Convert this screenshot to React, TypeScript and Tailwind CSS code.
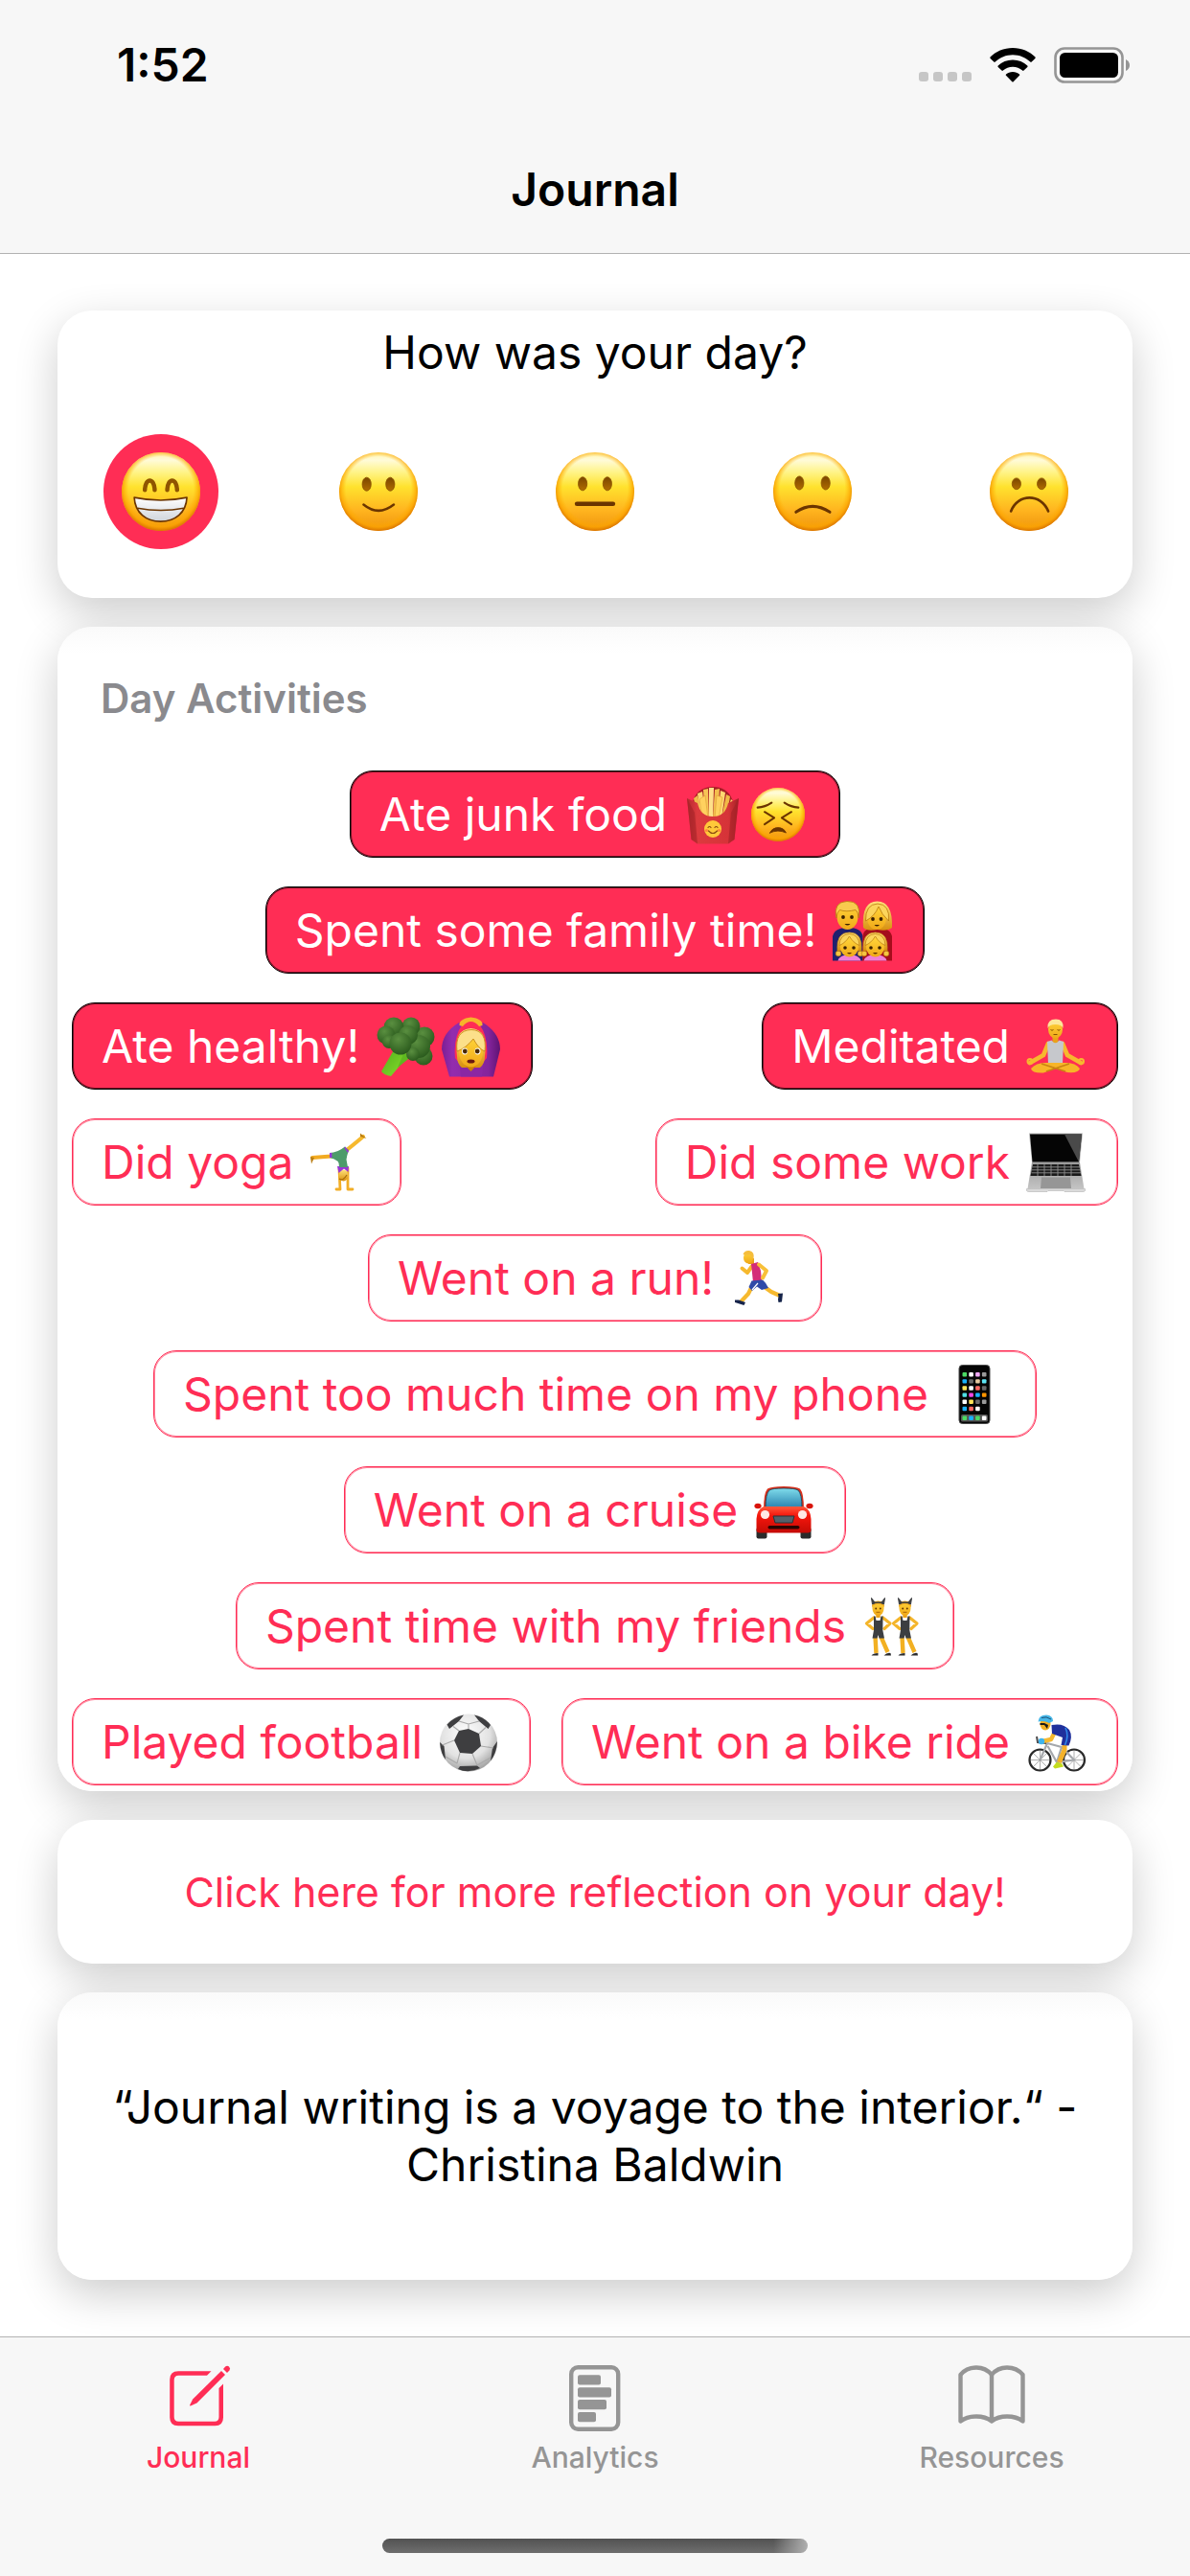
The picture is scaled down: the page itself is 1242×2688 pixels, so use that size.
import React, { useState } from "react";

/* ---------- shared gradients ---------- */

function Gradients() {
  return (
    <svg width="0" height="0" className="absolute" aria-hidden="true">
      <defs>
        <linearGradient id="faceFill" x1="0" y1="0" x2="0" y2="1">
          <stop offset="0" stopColor="#fff6b0" />
          <stop offset="0.1" stopColor="#fffbd8" />
          <stop offset="0.26" stopColor="#fff384" />
          <stop offset="0.44" stopColor="#ffe22e" />
          <stop offset="0.74" stopColor="#ffb41f" />
          <stop offset="1" stopColor="#ee920c" />
        </linearGradient>
        <radialGradient id="faceEdge" cx="0.5" cy="0.47" r="0.53">
          <stop offset="0.78" stopColor="#ffb000" stopOpacity="0" />
          <stop offset="0.9" stopColor="#fca400" stopOpacity="0.7" />
          <stop offset="1" stopColor="#d87200" />
        </radialGradient>
        <linearGradient id="eyeFill" x1="0" y1="0" x2="0" y2="1">
          <stop offset="0" stopColor="#7a4600" />
          <stop offset="1" stopColor="#b06c00" />
        </linearGradient>
        <linearGradient id="teeth" x1="0" y1="0" x2="0" y2="1">
          <stop offset="0" stopColor="#ffffff" />
          <stop offset="1" stopColor="#cfd4da" />
        </linearGradient>
        <linearGradient id="skin" x1="0" y1="0" x2="0" y2="1">
          <stop offset="0" stopColor="#ffd53a" />
          <stop offset="1" stopColor="#f0a818" />
        </linearGradient>
        <linearGradient id="hair" x1="0" y1="0" x2="0" y2="1">
          <stop offset="0" stopColor="#ffe27a" />
          <stop offset="1" stopColor="#d8900f" />
        </linearGradient>
        <linearGradient id="carton" x1="0" y1="0" x2="1" y2="0">
          <stop offset="0" stopColor="#b52a2e" />
          <stop offset="0.2" stopColor="#dc3a3e" />
          <stop offset="0.8" stopColor="#d63338" />
          <stop offset="1" stopColor="#a52226" />
        </linearGradient>
        <linearGradient id="purple" x1="0" y1="0" x2="1" y2="0">
          <stop offset="0" stopColor="#7b1f93" />
          <stop offset="0.18" stopColor="#932cae" />
          <stop offset="0.8" stopColor="#84249c" />
          <stop offset="1" stopColor="#5e1373" />
        </linearGradient>
        <radialGradient id="floret" cx="0.4" cy="0.3" r="0.7">
          <stop offset="0" stopColor="#5a8f40" />
          <stop offset="1" stopColor="#2c5c1e" />
        </radialGradient>
        <linearGradient id="stem" x1="0" y1="0" x2="1" y2="1">
          <stop offset="0" stopColor="#4fae1c" />
          <stop offset="1" stopColor="#8be02c" />
        </linearGradient>
        <linearGradient id="glass" x1="0" y1="0" x2="0" y2="1">
          <stop offset="0" stopColor="#7fdceb" />
          <stop offset="1" stopColor="#2b84b0" />
        </linearGradient>
        <linearGradient id="carBody" x1="0" y1="0" x2="0" y2="1">
          <stop offset="0" stopColor="#ff5a3c" />
          <stop offset="0.35" stopColor="#f5160c" />
          <stop offset="1" stopColor="#c40b05" />
        </linearGradient>
        <radialGradient id="ball" cx="0.45" cy="0.35" r="0.65">
          <stop offset="0" stopColor="#ffffff" />
          <stop offset="0.65" stopColor="#e2e2e2" />
          <stop offset="1" stopColor="#a3a3a3" />
        </radialGradient>
        <linearGradient id="metal" x1="0" y1="0" x2="0" y2="1">
          <stop offset="0" stopColor="#9a9a9a" />
          <stop offset="1" stopColor="#c4c4c4" />
        </linearGradient>
      </defs>
    </svg>
  );
}

/* ---------- faces, drawn on a 100 unit disc ---------- */

function Eyes({ dx, y, rx = 5.6, ry = 8.6 }: { dx: number; y: number; rx?: number; ry?: number }) {
  return (
    <g fill="url(#eyeFill)" stroke="#8a5200" strokeWidth="1">
      <ellipse cx={50 - dx} cy={y} rx={rx} ry={ry} />
      <ellipse cx={50 + dx} cy={y} rx={rx} ry={ry} />
    </g>
  );
}

const mouthLine = { fill: "none", stroke: "#6b3500", strokeWidth: 3.6, strokeLinecap: "round" as const };

const features: Record<string, React.ReactNode> = {
  grin: (
    <g>
      <path d="M29.500 48C30 32 41.500 32 42 48M58 48C58.500 32 70 32 70.500 48" fill="none" stroke="#8f5500" strokeWidth="5.400" strokeLinecap="round" />
      <path d="M16 57.500Q50 64.500 83 57.500C82 77 68 88 49.500 88C31 88 17 77 16 57.500Z" fill="url(#teeth)" stroke="#6b3500" strokeWidth="2" strokeLinejoin="round" />
      <path d="M20 71Q50 76.500 79 71" fill="none" stroke="#6b3500" strokeWidth="2" />
    </g>
  ),
  smile: (
    <g>
      <Eyes dx={15} y={40.5} />
      <path d="M31 66.500Q50 82 69.500 66.500" {...mouthLine} strokeWidth={3} />
    </g>
  ),
  neutral: (
    <g>
      <Eyes dx={15.7} y={40} />
      <path d="M27 65.500H73" stroke="#6b3500" strokeWidth="5.600" strokeLinecap="round" />
    </g>
  ),
  slightFrown: (
    <g>
      <Eyes dx={16.700} y={39} />
      <path d="M29 76Q50 61.500 72 76" {...mouthLine} />
    </g>
  ),
  frown: (
    <g>
      <Eyes dx={16} y={40} ry={7.2} />
      <path d="M27 75C36 52 65 52 74.500 75" {...mouthLine} strokeWidth={3.200} />
    </g>
  ),
  persevere: (
    <g fill="none" stroke="#6b3500" strokeWidth="4" strokeLinecap="round" strokeLinejoin="round">
      <path d="M12 37Q26 36 38 28M88 37Q74 36 62 28" />
      <path d="M25 45L43 56L25 68M75 45L57 56L75 68" strokeWidth="3.600" />
      <path d="M35 84C40 71 60 71 65 84Q50 77 35 84Z" fill="#6b3500" strokeWidth="1.500" />
    </g>
  ),
};

function Face({ kind, label, className }: { kind: string; label: string; className: string }) {
  return (
    <svg viewBox="0 0 100 100" className={className} role="img" aria-label={label}>
      <circle cx="50" cy="50" r="50" fill="url(#faceFill)" />
      <circle cx="50" cy="50" r="50" fill="url(#faceEdge)" />
      {features[kind]}
    </svg>
  );
}

/* ---------- small pictures, drawn on a 64 unit square ---------- */

function Bunny() {
  return (
    <g>
      <path d="M13 23L5.500 29L12 34.500M22.500 23L30 29L24 34.500" fill="none" stroke="#f4b52a" strokeWidth="3.200" strokeLinejoin="round" strokeLinecap="round" />
      <path d="M14.500 43L15.500 60M20.500 43L27.500 59" stroke="#f2b022" strokeWidth="4.400" />
      <path d="M10.500 62.500Q12 60 17.500 60V62.500ZM23.500 62.500Q27 59 30.500 60L31 62.500Z" fill="#2b2c2e" />
      <rect x="15.300" y="18" width="4.400" height="5" fill="#e9a21b" />
      <path d="M13 21.500H14.500L15.500 26H19.500L20.500 21.500H22.500L22.300 36L24 44.500H18.500L17.500 41L16.500 44.500H11.500L13 36Z" fill="#3c3e41" />
      <ellipse cx="17.500" cy="13.500" rx="6" ry="7.500" fill="url(#skin)" />
      <path d="M11 13Q10.500 5.500 17.500 5.500Q24.500 5.500 24 13Q23 9 17.500 9Q12 9 11 13Z" fill="#efab20" />
      <path d="M11.500 9Q17.500 5.500 23.500 9L24.500 2.500L21 7H14L10.500 2.500Z" fill="#3c3e41" stroke="#3c3e41" strokeLinejoin="round" />
      <circle cx="15.200" cy="13.500" r="0.900" fill="#5b3200" />
      <circle cx="19.800" cy="13.500" r="0.900" fill="#5b3200" />
      <path d="M15.500 17.300H19.500" stroke="#a05a00" strokeWidth="0.900" />
    </g>
  );
}

function Girl({ x }: { x: number }) {
  return (
    <g transform={`translate(${x} 0)`}>
      <path d="M-12 63.500Q-10 57 0 57Q10 57 12 63.500Z" fill="#f07fd6" />
      <circle cx="-11.500" cy="56" r="2.800" fill="#f5c542" stroke="#b9780c" strokeWidth="0.600" />
      <circle cx="11.500" cy="56" r="2.800" fill="#f5c542" stroke="#b9780c" strokeWidth="0.600" />
      <path d="M-12.500 53Q-14 34 0 34Q14 34 12.500 53Z" fill="url(#hair)" stroke="#c98a14" strokeWidth="0.700" />
      <ellipse cx="0" cy="49.500" rx="9.500" ry="10" fill="url(#skin)" />
      <path d="M-10.500 47.500Q-4 45 0 38Q4 45 10.500 47.500Q10 36 0 35.500Q-10 36 -10.500 47.500Z" fill="#fbd55c" stroke="#b9780c" strokeWidth="0.700" />
      <circle cx="-4.500" cy="50" r="1.800" fill="#3a2100" />
      <circle cx="4.500" cy="50" r="1.800" fill="#3a2100" />
      <path d="M-2.500 55Q0 58 2.500 55Z" fill="#5b2c00" />
    </g>
  );
}

const appColors = [
  "#4cd964", "#ffffff", "#f0a8f5", "#9a9a9a",
  "#19b2ff", "#6a6a6a", "#e6c9a0", "#5ee6f5",
  "#ffe55a", "#ffffff", "#ff6a63", "#6a6a6a",
  "#4fe0e6", "#f046e6", "#19b2ff", "#ff9500",
  "#ffffff", "#ffe55a", "#6a6a6a", "#9a9a9a",
  "#19b2ff", "#ff6a63", "#ffffff",
];
const dockColors = ["#4cd964", "#19b2ff", "#4cd964", "#ffffff"];

const pictures: Record<string, React.ReactNode> = {
  "🍟": (
    <g>
      <path d="M10 22Q14 3 32 3Q50 3 54 22V40H10Z" fill="#a81f25" />
      <path d="M12 15L16 12L22 38H17Z" fill="#f0bb4b" />
      <path d="M16 10L21 8L25 36H20Z" fill="#ffd873" />
      <path d="M22 6L27 5L28 36H24Z" fill="#f6c556" />
      <path d="M28 4L33 4L32 36H28Z" fill="#ffe08a" />
      <path d="M34 6L39 5L37 36H32Z" fill="#f3be4d" />
      <path d="M40 7L45 9L41 36H37Z" fill="#ffd873" />
      <path d="M46 11L50 13L46 36H41Z" fill="#f0b847" />
      <path d="M51 16L54 19L49 36H45Z" fill="#ffd46a" />
      <path d="M18 16L24 12L27 36H21ZM36 12L42 14L38 36H34Z" fill="#ffd15f" stroke="#dd9f35" strokeWidth="0.600" />
      <path d="M5 15L16 20Q19 34 32 34Q45 34 48 20L59 15L54.500 58L48 62.500H16L9.500 58Z" fill="url(#carton)" />
      <path d="M9.500 58L16 62.500L13 30L5 15ZM54.500 58L48 62.500L51 30L59 15Z" fill="#a02126" opacity="0.550" />
      <circle cx="32" cy="47" r="9" fill="#ffc93a" />
      <path d="M27 45.500Q28.500 43.500 30 45.500M34 45.500Q35.500 43.500 37 45.500M27.500 49Q32 54 36.500 49" fill="none" stroke="#8a4a10" strokeWidth="1.200" strokeLinecap="round" />
      <circle cx="25.500" cy="48.500" r="1.600" fill="#ff8a3a" />
      <circle cx="38.500" cy="48.500" r="1.600" fill="#ff8a3a" />
    </g>
  ),
  "👨‍👩‍👧‍👧": (
    <g>
      <path d="M1 63.500V38Q3 29 17 29Q31 29 32.500 38V63.500Z" fill="#20206e" />
      <path d="M63 63.500V38Q61 29 47 29Q33 29 32.500 38V63.500Z" fill="#a50d1c" />
      <path d="M33 29Q31 1.500 47.500 1.500Q64 1.500 63 29Q58 33 47.500 31Q37 33 33 29Z" fill="url(#hair)" />
      <ellipse cx="16.500" cy="17.500" rx="11" ry="13.500" fill="url(#skin)" />
      <path d="M4.800 19Q1.500 2 16 1.500Q31.500 1 28.300 19Q27.500 12 25 10.500Q15 13 8.500 10.500Q5.500 13 4.800 19Z" fill="#f8cb4e" stroke="#b9780c" strokeWidth="0.800" />
      <ellipse cx="47" cy="19" rx="10" ry="12" fill="url(#skin)" />
      <path d="M35.500 22Q45 17 49 7Q52 15 59.500 22Q61 4.500 48 4Q35 4.500 35.500 22Z" fill="#fbd55c" stroke="#b9780c" strokeWidth="0.800" />
      <g fill="#3a2100">
        <circle cx="12" cy="18" r="1.900" />
        <circle cx="21" cy="18" r="1.900" />
        <circle cx="43" cy="20" r="1.900" />
        <circle cx="51.500" cy="20" r="1.900" />
        <path d="M13.500 25Q16.500 28 19.500 25ZM44.500 26Q47.200 29 50 26Z" />
      </g>
      <Girl x={18.500} />
      <Girl x={45.500} />
    </g>
  ),
  "🥦": (
    <g>
      <path d="M21 34L34 38L28 50L17 63Q10 62 7 58Z" fill="url(#stem)" />
      <path d="M30 40L44 38L24 54Z" fill="#5fb81f" />
      <g fill="url(#floret)">
        <circle cx="51" cy="42" r="9.500" />
        <circle cx="52" cy="22" r="10.500" />
        <circle cx="46" cy="32" r="12" />
        <circle cx="38" cy="11" r="9.500" />
        <circle cx="20" cy="12" r="10.500" />
        <circle cx="12" cy="20" r="9.500" />
        <circle cx="35" cy="20" r="10" />
        <circle cx="15" cy="27" r="7" />
        <circle cx="40" cy="40" r="7" />
        <circle cx="27" cy="29" r="11.500" />
      </g>
    </g>
  ),
  "🙆‍♀️": (
    <g>
      <path d="M20 7Q2 18 2 35L10 63.500H56L63 35Q63 18 45 7L42 10Q51 22 49 44L44 50H21L16 44Q14 22 23 10Z" fill="url(#purple)" />
      <path d="M20 45L22 63.500H44L46 45Z" fill="#8a27a3" />
      <path d="M20.500 10Q20 3 32.500 1.500Q45 3 44.500 10L41 11Q37 6 32.500 6Q28 6 24 11Z" fill="#f6b52a" />
      <path d="M18 42Q14 14 32.500 13Q51 14 47 42Q47 50 42 54H23Q18 50 18 42Z" fill="url(#hair)" />
      <path d="M32.500 58L26 51H39Z" fill="#c97e0c" />
      <ellipse cx="32.500" cy="37.500" rx="12.500" ry="16" fill="url(#skin)" />
      <path d="M18 37Q15.500 15 33 14.500Q49.500 15 47 37Q41 35 35 24Q27 34 18 37Z" fill="#fce08a" stroke="#bf7f10" strokeWidth="0.800" />
      <ellipse cx="26" cy="37" rx="3" ry="3.400" fill="#fff" />
      <ellipse cx="39.500" cy="37" rx="3" ry="3.400" fill="#fff" />
      <circle cx="26.300" cy="37" r="2.400" fill="#4a2a00" />
      <circle cx="39.200" cy="37" r="2.400" fill="#4a2a00" />
      <ellipse cx="32.500" cy="47.500" rx="4" ry="2" fill="#6b1a10" />
    </g>
  ),
  "🧘": (
    <g>
      <path d="M24 29L19 41L5 49M39 29L44 41L58 49" fill="none" stroke="#f6b92e" strokeWidth="4.600" strokeLinecap="round" strokeLinejoin="round" />
      <circle cx="5" cy="47.500" r="2.500" fill="none" stroke="#f6b92e" strokeWidth="2" />
      <circle cx="58.500" cy="47.500" r="2.500" fill="none" stroke="#f6b92e" strokeWidth="2" />
      <rect x="28.500" y="20" width="6" height="9" fill="#e9a21b" />
      <path d="M23 27L27.500 25.500Q31.500 31 35.500 25.500L40 27L39 50H24Z" fill="#c6c8cc" />
      <path d="M6 55Q12 48 24 49L40 49Q52 48 57 55Q56 60 44 59L31.500 55L19 59.500Q7 60 6 55Z" fill="#f7b528" />
      <path d="M17 50L42 58M46 50L22 58" stroke="#c98312" strokeWidth="1.500" />
      <ellipse cx="31.500" cy="14" rx="7.500" ry="9.500" fill="url(#skin)" />
      <path d="M23.500 13Q22.500 3.500 32 3.500Q40.500 3.500 39.500 13Q38 9 31.500 9Q25 9 23.500 13Z" fill="#fde79a" />
      <path d="M26.500 14.500Q28 16 29.500 14.500M33.500 14.500Q35 16 36.500 14.500M29.500 19.500H33.500" stroke="#8a5200" strokeWidth="1" fill="none" />
    </g>
  ),
  "🤸‍♀️": (
    <g>
      <path d="M36 22Q44 16 57 5" stroke="#f6b92e" strokeWidth="4.200" fill="none" strokeLinecap="round" />
      <path d="M54 5L60.500 7L54 1.500Z" fill="#b97d12" />
      <path d="M30 25L4 27" stroke="#f2ab22" strokeWidth="3.800" strokeLinecap="round" />
      <path d="M2 26L6 27L3 33.500Z" fill="#b97d12" />
      <path d="M32 39L33 60H29M41 38L41 60L46 60" fill="none" stroke="#f2ae26" strokeWidth="2.800" strokeLinejoin="round" strokeLinecap="round" />
      <ellipse cx="36.500" cy="45.500" rx="4.800" ry="6" fill="url(#hair)" />
      <path d="M32 49Q36 52 40 45" stroke="#a96c0b" strokeWidth="1.200" fill="none" />
      <path d="M30 36L42 36L41.500 42L37 38.500L31.500 43Z" fill="#9a35d6" />
      <path d="M22 22Q30 22 38 15.500L42 19Q40 25 39.500 29L41 37H32Q33 29 22 27Z" fill="#4d9b6b" />
      <path d="M38 15.500L42 20L41 22L37.500 17ZM22 22L24.500 22V27H22Z" fill="#9a35d6" />
    </g>
  ),
  "💻": (
    <g>
      <path d="M4 1.500H60L57 32H7Z" fill="#b8b8b8" />
      <path d="M5 2.500H59L56 31.500H7.500Z" fill="#050505" />
      <path d="M41 2.500H59L56 31.500Z" fill="#4a4a4a" />
      <path d="M7 32H57L61.500 59.500H2.500Z" fill="url(#metal)" />
      <path d="M8 34H56L58.500 46H5.500Z" fill="#1a1a1a" />
      <path d="M7.500 36.800H57M7 39.800H57.500M6.500 42.800H58M13 34V46M20 34V46M27 34V46M34 34V46M41 34V46M48 34V46" stroke="#8f8f8f" strokeWidth="0.900" />
      <path d="M17 47.500H47L48 59H16Z" fill="#969696" />
      <path d="M1.500 59.500H62.500V61.500Q62 62.500 60 62.500H41L40 61.500H24L23 62.500H4Q2 62.500 1.500 61.500Z" fill="#dadada" stroke="#a8a8a8" strokeWidth="0.500" />
    </g>
  ),
  "🏃‍♂️": (
    <g>
      <path d="M24 19L19 26L13.500 21.500" fill="none" stroke="#f6b92e" strokeWidth="4" strokeLinejoin="round" strokeLinecap="round" />
      <path d="M37 41L44 46L53 50" fill="none" stroke="#f6b92e" strokeWidth="4.400" strokeLinejoin="round" strokeLinecap="round" />
      <path d="M24 40L20 48L12.500 56" fill="none" stroke="#f6b92e" strokeWidth="4.200" strokeLinejoin="round" strokeLinecap="round" />
      <path d="M6 54.500L10 54.500L17 57L15.500 60L6 57Z" fill="#16244a" />
      <path d="M51 48L56 47.500L55 56.500L51.500 57Q50.500 54 51.500 51Z" fill="#16244a" />
      <rect x="20" y="11" width="6" height="6" fill="#e9a21b" />
      <path d="M23 17L30 15L33 24L34 34L25 36Q24 26 23 17Z" fill="#d42c78" />
      <path d="M23.500 34.500L35 33.500Q39 37 41 42L34 44L29 40.500L24 45L20.500 41Z" fill="#2f4aa8" />
      <path d="M24 44L30 37" stroke="#ffffff" strokeWidth="1.200" />
      <path d="M31 17.500L39 24L35 31.500" fill="none" stroke="#f8c038" strokeWidth="4" strokeLinejoin="round" strokeLinecap="round" />
      <ellipse cx="20" cy="10.500" rx="5" ry="6" fill="url(#skin)" />
      <path d="M14.500 7Q16 2.500 21 3Q27 4 25.500 12L23 10L22 7Q18 8 14.500 7Z" fill="#f5bd3c" />
    </g>
  ),
  "📱": (
    <g>
      <rect x="16" y="1.500" width="32" height="61" rx="3.500" fill="#050505" stroke="#4b4b4b" />
      <rect x="18" y="53" width="28" height="7.500" rx="1.500" fill="#555" />
      {appColors.map((c, i) => (
        <rect key={i} x={19.500 + (i % 4) * 6.800} y={9 + Math.floor(i / 4) * 7.150} width="4.600" height="4.400" rx="1" fill={c} />
      ))}
      {dockColors.map((c, i) => (
        <rect key={i} x={19.500 + i * 6.800} y={54.600} width="4.600" height="4.400" rx="1" fill={c} />
      ))}
    </g>
  ),
  "🚘": (
    <g>
      <rect x="3.500" y="50" width="11" height="11.500" rx="2" fill="#2a2a2a" />
      <rect x="49.500" y="50" width="11" height="11.500" rx="2" fill="#2a2a2a" />
      <ellipse cx="5" cy="27.500" rx="3.600" ry="2.800" fill="#d9140b" />
      <ellipse cx="59" cy="27.500" rx="3.600" ry="2.800" fill="#d9140b" />
      <path d="M11 31Q11 14 15 9.500Q19 7 32 7Q45 7 49 9.500Q53 14 53 31Z" fill="#d8301c" />
      <path d="M13 29Q13 15 17 11Q20 9 32 9Q44 9 47 11Q51 15 51 29Z" fill="url(#glass)" stroke="#173c52" strokeWidth="0.800" />
      <path d="M11 28H53Q60 31 60.500 41V53Q60 55.500 57 55.500H7Q4 55.500 3.500 53V41Q4 31 11 28Z" fill="url(#carBody)" />
      <circle cx="12.500" cy="36.500" r="4.600" fill="#ffe9e4" />
      <circle cx="51.500" cy="36.500" r="4.600" fill="#ffe9e4" />
      <path d="M21 38H43L41 45H23Z" fill="#54616a" stroke="#2a3338" strokeWidth="1" />
      <rect x="15.500" y="48" width="33" height="3.600" rx="1.800" fill="#2b0502" />
    </g>
  ),
  "👯": (
    <g>
      <Bunny />
      <g transform="translate(28 0)">
        <Bunny />
      </g>
    </g>
  ),
  "⚽": (
    <g>
      <circle cx="32" cy="32.500" r="30" fill="url(#ball)" />
      <path d="M32 18L22 20L17 30L23 43L36 44L45 36L43 23Z" fill="#3e3e40" />
      <path d="M27 3.500Q16 6 9.500 13.500L12 18L22 10ZM38 3.500Q49 6 55 14L52.500 18L43 10ZM2 32Q3 44 8 50L6.500 36ZM62 31Q61.500 43 55 51.500L57 38ZM23 57L41 56.500L44 59Q32 65 21 60Z" fill="#3e3e40" />
      <path d="M22 20L16 15.500M43 23L50 16.500M17 30L4.500 35M23 43L20 54M36 44L41 56M45 36L58 38M22 10L32 13L43 10M32 13V18M20 54L8 47M41 56L55 48" stroke="#a9a9a9" strokeWidth="1.100" fill="none" />
    </g>
  ),
  "🚴‍♂️": (
    <g>
      <g fill="none" stroke="#8d8d8d" strokeWidth="0.700">
        <path d="M5 50.500H26M15.500 40V61M8 43L23 58M23 43L8 58M40.500 50.500H61.500M51 40V61M43.500 43L58.500 58M58.500 43L43.500 58" />
      </g>
      <g fill="none" stroke="#2a2a2a" strokeWidth="2.200">
        <circle cx="15.500" cy="50.500" r="11" />
        <circle cx="51" cy="50.500" r="11" />
      </g>
      <path d="M15.500 50.500L23 33L38 37L33 53L23.500 36M33 53L51 50.500L38 37" fill="none" stroke="#a5a8ac" strokeWidth="2.200" strokeLinejoin="round" />
      <path d="M22 33L13 32L12 26" fill="none" stroke="#4c4c4e" strokeWidth="2" />
      <path d="M41 33L41 40L35.500 53" fill="none" stroke="#f4b22a" strokeWidth="5" strokeLinejoin="round" />
      <path d="M29 57.500L33 52.500L38.500 54.500L40 57.500L31 59.500Z" fill="#c3dc1e" />
      <path d="M31 21L27 29L18 31" fill="none" stroke="#f6b92e" strokeWidth="4.400" strokeLinejoin="round" strokeLinecap="round" />
      <circle cx="17" cy="31" r="3.200" fill="#3db4ee" />
      <path d="M27.500 14Q40 11.500 46 19Q50 26 45.500 35.500L37.500 35L39 27L28 23Z" fill="#20309c" />
      <path d="M42 17Q46 25 41.500 35" fill="none" stroke="#2f86e8" strokeWidth="1.600" />
      <ellipse cx="21" cy="13" rx="5.500" ry="6.500" fill="#f3b024" />
      <path d="M15.500 12H20L24 14L23 18L20 14H15.500Z" fill="#1b1b1b" />
      <path d="M13.500 10.500Q14 3.500 22 3.500Q29 4 29 10L25 12Q20 9 13.500 10.500Z" fill="#47b7e8" />
      <path d="M17 6.500Q22 4.500 27 8" fill="none" stroke="#1c4f74" strokeWidth="1" />
    </g>
  ),
};

function Picture({ emoji }: { emoji: string }) {
  return (
    <span className="flex w-[68px] justify-center">
      {emoji === "😣" ? (
        <Face kind="persevere" label={emoji} className="size-14" />
      ) : (
        <svg viewBox="0 0 64 64" className="size-16" role="img" aria-label={emoji}>
          {pictures[emoji]}
        </svg>
      )}
    </span>
  );
}

/* ---------- status bar and tab icons ---------- */

function WifiIcon() {
  return (
    <svg viewBox="0 0 48 36" className="h-9 w-12" aria-hidden="true">
      <path d="M24 0C33.500 0 41.500 3.600 47.500 9.500Q48 10.200 47.400 10.900L43.700 14.600Q43 15.200 42.300 14.600C37.300 9.900 31 7.200 24 7.200S10.700 9.900 5.700 14.600Q5 15.200 4.300 14.600L0.600 10.900Q0 10.200 0.500 9.500C6.500 3.600 14.500 0 24 0Z" />
      <path d="M24 12.500C30 12.500 35.300 14.800 39.300 18.400Q40 19.200 39.300 19.900L35.500 23.600Q34.800 24.200 34.100 23.600C31.300 21.200 27.900 19.700 24 19.700S16.700 21.200 13.900 23.600Q13.200 24.200 12.500 23.600L8.700 19.900Q8 19.200 8.700 18.400C12.700 14.800 18 12.500 24 12.500Z" />
      <path d="M24 25C26.800 25 29.200 25.900 31 27.400Q31.700 28.100 31 28.800L24.700 35.200Q24 35.800 23.300 35.200L17 28.800Q16.300 28.100 17 27.400C18.800 25.900 21.200 25 24 25Z" />
    </svg>
  );
}

function BatteryIcon() {
  return (
    <svg viewBox="0 0 80 38" className="h-[38px] w-20" aria-hidden="true">
      <rect x="1.500" y="1.500" width="70" height="35" rx="9.500" fill="none" stroke="#959595" strokeWidth="2.600" />
      <rect x="6" y="6" width="61" height="26" rx="5.500" />
      <path d="M75 13Q79 15 79 19T75 25Z" fill="#959595" />
    </svg>
  );
}

function ComposeIcon() {
  return (
    <svg viewBox="0 0 72 72" className="size-[72px]" aria-hidden="true">
      <path d="M49.500 8.200H15Q6.200 8.200 6.200 17V56.500Q6.200 65.300 15 65.300H53.500Q62 65.300 62 56.500V21.500L57.500 26V56Q57.500 60.800 53 60.800H15.500Q10.700 60.800 10.700 56V17.500Q10.700 12.700 15.500 12.700H45Z" fill="currentColor" />
      <path d="M60 8L64 12L34.500 41.500L27.800 44.400Q26.800 44.500 27.200 43.500L30.200 37.500Z" fill="currentColor" />
      <path d="M62 6L64.200 3.600Q66.200 2 68 3.600Q70 5.500 68.400 7.600L66 10Z" fill="currentColor" />
    </svg>
  );
}

function AnalyticsIcon() {
  return (
    <svg viewBox="0 0 72 72" className="size-[72px]" aria-hidden="true">
      <rect x="11.200" y="4.200" width="49" height="64.600" rx="7" fill="none" stroke="currentColor" strokeWidth="4.400" />
      <g fill="currentColor">
        <rect x="18" y="12.300" width="24" height="10.300" rx="2" />
        <rect x="18" y="25.200" width="35" height="10.300" rx="2" />
        <rect x="18" y="38" width="30" height="10.300" rx="2" />
        <rect x="18" y="50.900" width="19" height="10.300" rx="2" />
      </g>
    </svg>
  );
}

function BookIcon() {
  return (
    <svg viewBox="0 0 72 72" className="size-[72px]" aria-hidden="true">
      <path d="M3.500 60.500V12C8 6.500 14 4.500 20 4.500S31.500 6.500 36 12C40.500 6.500 46 4.500 52 4.500S64 6.500 68.500 12V60.500C64 57 58.500 55.500 52 55.500S40.500 57 36 60.500C31.500 57 26.500 55.500 20 55.500S8 57 3.500 60.500ZM36 12V60.500" fill="none" stroke="currentColor" strokeWidth="4.400" strokeLinejoin="round" />
    </svg>
  );
}

/* ---------- data ---------- */

const moods = [
  { kind: "grin", label: "😁" },
  { kind: "smile", label: "🙂" },
  { kind: "neutral", label: "😐" },
  { kind: "slightFrown", label: "🙁" },
  { kind: "frown", label: "☹️" },
];

type Activity = { text: string; emojis: string[] };

const activityRows: Activity[][] = [
  [{ text: "Ate junk food", emojis: ["🍟", "😣"] }],
  [{ text: "Spent some family time!", emojis: ["👨‍👩‍👧‍👧"] }],
  [
    { text: "Ate healthy!", emojis: ["🥦", "🙆‍♀️"] },
    { text: "Meditated", emojis: ["🧘"] },
  ],
  [
    { text: "Did yoga", emojis: ["🤸‍♀️"] },
    { text: "Did some work", emojis: ["💻"] },
  ],
  [{ text: "Went on a run!", emojis: ["🏃‍♂️"] }],
  [{ text: "Spent too much time on my phone", emojis: ["📱"] }],
  [{ text: "Went on a cruise", emojis: ["🚘"] }],
  [{ text: "Spent time with my friends", emojis: ["👯"] }],
  [
    { text: "Played football", emojis: ["⚽"] },
    { text: "Went on a bike ride", emojis: ["🚴‍♂️"] },
  ],
];

const tabs = [
  { name: "Journal", Icon: ComposeIcon },
  { name: "Analytics", Icon: AnalyticsIcon },
  { name: "Resources", Icon: BookIcon },
];

/* ---------- page parts ---------- */

function Card({ tinted = false, className = "", children }: { tinted?: boolean; className?: string; children: React.ReactNode }) {
  const fill = tinted ? "bg-[linear-gradient(#fafafa,#ffffff_28px)]" : "bg-white";
  return <section className={`rounded-[36px] shadow-[0_15px_45px_rgba(0,0,0,0.2)] ${fill} ${className}`}>{children}</section>;
}

function Chip({ activity, on, onToggle }: { activity: Activity; on: boolean; onToggle: () => void }) {
  const look = on
    ? "border-black bg-[#ff2d55] text-white shadow-[inset_0_0_0_1px_#00000090]"
    : "border-[#ff2d55] bg-white text-[#ff2d55] shadow-[inset_0_0_0_1px_#ff2d5590]";
  return (
    <button
      type="button"
      aria-pressed={on}
      onClick={onToggle}
      className={`flex h-[91px] items-center gap-[14px] rounded-3xl border px-[30px] text-5xl whitespace-nowrap ${look}`}
    >
      {activity.text}
      <span className="flex items-center">
        {activity.emojis.map((e) => (
          <Picture key={e} emoji={e} />
        ))}
      </span>
    </button>
  );
}

export default function App() {
  const [mood, setMood] = useState(0);
  const [tab, setTab] = useState("Journal");
  const [chosen, setChosen] = useState(["Ate junk food", "Spent some family time!", "Ate healthy!", "Meditated"]);
  const toggle = (t: string) => setChosen((c) => (c.includes(t) ? c.filter((x) => x !== t) : [...c, t]));

  return (
    <div className="flex min-h-screen flex-col bg-white font-['Inter',sans-serif] text-black">
      <Gradients />
      <header className="border-b border-[#b2b2b2] bg-[#f7f7f7]">
        <div className="flex items-center justify-between pt-[38px] pr-[62px] pl-[122px]">
          <span className="text-5xl leading-[60px] font-semibold">1:52</span>
          <div className="flex items-center gap-[19px]">
            <span className="flex gap-[5px] pt-6">
              <span className="size-[10px] rounded-[3px] bg-[#c6c6c6]" />
              <span className="size-[10px] rounded-[3px] bg-[#c6c6c6]" />
              <span className="size-[10px] rounded-[3px] bg-[#c6c6c6]" />
              <span className="size-[10px] rounded-[3px] bg-[#c6c6c6]" />
            </span>
            <WifiIcon />
            <BatteryIcon />
          </div>
        </div>
        <h1 className="pt-[70px] pb-9 text-center text-5xl leading-[60px] font-semibold">Journal</h1>
      </header>

      <main className="flex flex-1 flex-col gap-[30px] px-[60px] pt-[59px] pb-[59px]">
        <Card className="px-12 pt-[14px] pb-[51px]">
          <h2 className="text-center text-5xl leading-[60px]">How was your day?</h2>
          <div className="mt-[55px] flex justify-between">
            {moods.map((m, i) => (
              <button
                key={m.kind}
                type="button"
                aria-pressed={mood === i}
                onClick={() => setMood(i)}
                className={`flex size-[120px] items-center justify-center rounded-full ${mood === i ? "bg-[#ff2d55]" : ""}`}
              >
                <Face kind={m.kind} label={m.label} className="size-[82px]" />
              </button>
            ))}
          </div>
        </Card>

        <Card tinted className="px-[15px] pt-[45px] pb-[6px]">
          <h2 className="px-[30px] text-[42px] leading-[60px] font-semibold text-[#8a8a8e]">Day Activities</h2>
          <div className="mt-[45px] flex flex-col gap-[30px]">
            {activityRows.map((row) => (
              <div key={row[0].text} className={`flex ${row.length > 1 ? "justify-between" : "justify-center"}`}>
                {row.map((a) => (
                  <Chip key={a.text} activity={a} on={chosen.includes(a.text)} onToggle={() => toggle(a.text)} />
                ))}
              </div>
            ))}
          </div>
        </Card>

        <Card className="py-[45px] text-center">
          <a href="#reflection" className="block text-[43px] leading-[60px] text-[#ff2d55]">
            Click here for more reflection on your day!
          </a>
        </Card>

        <Card tinted className="px-12 py-[90px]">
          <p className="text-center text-5xl leading-[60px]">“Journal writing is a voyage to the interior.“ - Christina Baldwin</p>
        </Card>
      </main>

      <footer className="border-t border-[#b2b2b2] bg-[#f7f7f7] pb-6">
        <nav className="grid grid-cols-3 pt-[27px]">
          {tabs.map(({ name, Icon }) => (
            <a
              key={name}
              href={`#${name.toLowerCase()}`}
              aria-current={tab === name ? "page" : undefined}
              onClick={() => setTab(name)}
              className={`flex flex-col items-center gap-2 text-[30px] leading-9 font-medium ${tab === name ? "text-[#ff2d55]" : "text-[#959595]"}`}
            >
              <Icon />
              {name}
            </a>
          ))}
        </nav>
        <div className="mx-auto mt-[67px] h-[15px] w-[444px] rounded-full bg-[linear-gradient(to_right,transparent_92%,#b0b0b0),linear-gradient(#525252,#6e6e6e)]" />
      </footer>
    </div>
  );
}
